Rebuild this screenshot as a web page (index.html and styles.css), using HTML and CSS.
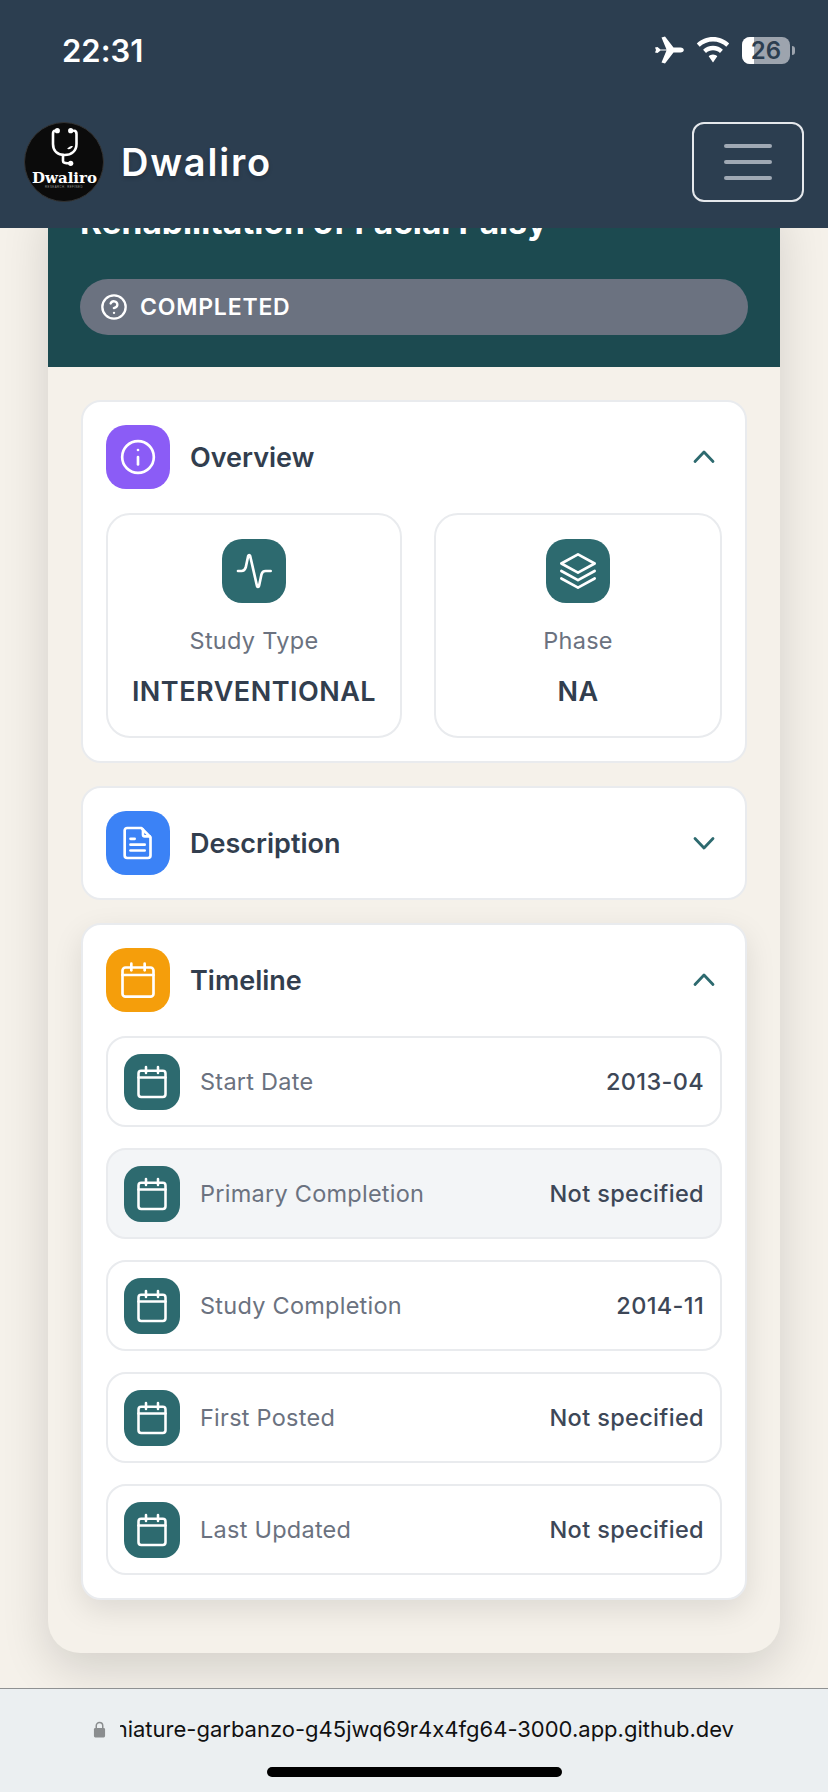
FILE: index.html
```html
<!DOCTYPE html>
<html lang="en">
<head>
  <meta charset="UTF-8" />
  <title>Dwaliro</title>
  <link rel="stylesheet" href="styles.css">
</head>
<body>
  <div class="screen">
    <header class="topbar">
      <div class="status-row">
        <span class="clock">22:31</span>
        <div class="status-icons">
          <svg class="plane" viewBox="0 0 30 28"><path d="M1 11.500 3.500 11 6.500 13.500H12.500L7.500 1.500 11 .5 19.500 11.500H26.500C28.500 11.500 29.800 12.800 29.800 14S28.500 16.500 26.500 16.500H19.500L11 27.500 7.500 26.500 12.500 14.500H6.500L3.500 17 1 16.500 2 14Z" fill="#fff"/></svg>
          <svg class="wifi" viewBox="0 0 34 26"><path d="M17 0C10.600 0 5 2.500 .8 6.500L3.700 9.800C7.200 6.500 11.900 4.500 17 4.500S26.800 6.500 30.300 9.800L33.200 6.500C29 2.500 23.400 0 17 0ZM17 8.700C13.200 8.700 9.700 10.200 7.100 12.700L10 16C11.800 14.200 14.300 13.200 17 13.200S22.200 14.200 24 16L26.900 12.700C24.300 10.200 20.800 8.700 17 8.700ZM17 17.500C15.300 17.500 13.800 18.200 12.700 19.300L17 25.500 21.300 19.300C20.200 18.200 18.700 17.500 17 17.500Z" fill="#fff"/></svg>
          <div class="battery">
            <div class="battery-body"><div class="battery-fill"></div><span class="battery-num">26</span></div>
            <div class="battery-nub"></div>
          </div>
        </div>
      </div>
      <nav class="nav-row">
        <div class="brand">
          <svg class="logo" viewBox="0 0 80 80">
            <circle cx="40" cy="40" r="39.500" fill="#0b0b0b" stroke="#333" stroke-width="1"/>
            <path d="M31 8.700C29.500 8.700 29 10 29 12V22C29 29 33.500 33 40.500 33S52.500 29 52.500 22V12C52.500 10 52 8.700 50 8.700" fill="none" stroke="#fff" stroke-width="2.600" stroke-linecap="round"/>
            <circle cx="33.300" cy="8.700" r="2.600" fill="#fff"/>
            <circle cx="46.700" cy="8.700" r="2.600" fill="#fff"/>
            <path d="M39 33V39C39 40.800 40.500 41.300 46 41.300" fill="none" stroke="#fff" stroke-width="2.600" stroke-linecap="round"/>
            <circle cx="46.700" cy="41.300" r="2.600" fill="#fff"/>
            <path d="M43 27C45 24.500 47 24 49 24C48 26.500 46 27.500 43 27Z" fill="#fff"/>
            <text class="logo-name" x="40.500" y="61" text-anchor="middle">Dwaliro</text>
            <text class="logo-tag" x="40" y="65.500" text-anchor="middle">RESEARCH. REFINED</text>
          </svg>
          <span class="brand-name">Dwaliro</span>
        </div>
        <button class="toggler"><span></span><span></span><span></span></button>
      </nav>
    </header>

    <div class="scroller">
      <main class="study">
        <div class="hero">
          <h1 class="hero-title">Rehabilitation of Facial Palsy</h1>
          <div class="status-pill">
            <svg viewBox="0 0 24 24" class="pill-icon"><circle cx="12" cy="12" r="10"/><path d="M9.100 9a3 3 0 0 1 5.800 1c0 2-3 3-3 3"/><path d="M12 17h.01"/></svg>
            <span>COMPLETED</span>
          </div>
        </div>

        <div class="study-body">
          <section class="panel">
            <div class="panel-head">
              <div class="icon-box purple">
                <svg viewBox="0 0 24 24" class="i-40"><circle cx="12" cy="12" r="9.500"/><path d="M12 16.500v-4.500"/><path d="M12 7.800h.01"/></svg>
              </div>
              <h2>Overview</h2>
              <svg viewBox="0 0 24 24" class="chevron"><path d="M3 16.500l9-9.500 9 9.500"/></svg>
            </div>
            <div class="fact-grid">
              <div class="fact">
                <div class="icon-box teal">
                  <svg viewBox="0 0 24 24" class="i-40"><path d="M2.400 12H4.500C6 12 6.500 11.500 7 10L8.500 3C8.800 2.200 9.400 2.200 9.700 3L13.800 21C14.100 21.800 14.800 21.800 15 21L16.500 14C16.800 12.800 17.500 12 19 12H22"/></svg>
                </div>
                <div class="fact-label">Study Type</div>
                <div class="fact-value">INTERVENTIONAL</div>
              </div>
              <div class="fact">
                <div class="icon-box teal">
                  <svg viewBox="0 0 24 24" class="i-40"><path d="M12 2 22 7.500 12 13 2 7.500Z"/><path d="M2 12 12 17.500 22 12"/><path d="M2 16.500 12 22 22 16.500"/></svg>
                </div>
                <div class="fact-label">Phase</div>
                <div class="fact-value">NA</div>
              </div>
            </div>
          </section>

          <section class="panel">
            <div class="panel-head">
              <div class="icon-box blue">
                <svg viewBox="0 0 24 24" class="i-40"><path d="M5.500 3H14L19.500 8.500V19.500A1.500 1.500 0 0 1 18 21H5.500A1.500 1.500 0 0 1 4 19.500V4.500A1.500 1.500 0 0 1 5.500 3Z"/><path d="M15 4V7A1 1 0 0 0 16 8H19"/><path d="M7.500 9.500h2.500"/><path d="M7.500 13h8.500"/><path d="M7.500 16.500h8.500"/></svg>
              </div>
              <h2>Description</h2>
              <svg viewBox="0 0 24 24" class="chevron"><path d="M3 7.500l9 9.500 9-9.500"/></svg>
            </div>
          </section>

          <section class="panel raised">
            <div class="panel-head">
              <div class="icon-box amber">
                <svg viewBox="0 0 24 24" class="i-40"><rect x="2.700" y="4.500" width="18.600" height="17.500" rx="1.800"/><path d="M8 2.200v4"/><path d="M16 2.200v4"/><path d="M2.700 9h18.600"/></svg>
              </div>
              <h2>Timeline</h2>
              <svg viewBox="0 0 24 24" class="chevron"><path d="M3 16.500l9-9.500 9 9.500"/></svg>
            </div>
            <div class="dates">
              <div class="date-row">
                <div class="icon-box teal small"><svg viewBox="0 0 24 24" class="i-36"><rect x="3" y="4.500" width="18" height="17.500" rx="1.800"/><path d="M8 2v4"/><path d="M16 2v4"/><path d="M3 9h18"/></svg></div>
                <span class="date-label">Start Date</span>
                <span class="date-value">2013-04</span>
              </div>
              <div class="date-row shaded">
                <div class="icon-box teal small"><svg viewBox="0 0 24 24" class="i-36"><rect x="3" y="4.500" width="18" height="17.500" rx="1.800"/><path d="M8 2v4"/><path d="M16 2v4"/><path d="M3 9h18"/></svg></div>
                <span class="date-label">Primary Completion</span>
                <span class="date-value">Not specified</span>
              </div>
              <div class="date-row">
                <div class="icon-box teal small"><svg viewBox="0 0 24 24" class="i-36"><rect x="3" y="4.500" width="18" height="17.500" rx="1.800"/><path d="M8 2v4"/><path d="M16 2v4"/><path d="M3 9h18"/></svg></div>
                <span class="date-label">Study Completion</span>
                <span class="date-value">2014-11</span>
              </div>
              <div class="date-row">
                <div class="icon-box teal small"><svg viewBox="0 0 24 24" class="i-36"><rect x="3" y="4.500" width="18" height="17.500" rx="1.800"/><path d="M8 2v4"/><path d="M16 2v4"/><path d="M3 9h18"/></svg></div>
                <span class="date-label">First Posted</span>
                <span class="date-value">Not specified</span>
              </div>
              <div class="date-row">
                <div class="icon-box teal small"><svg viewBox="0 0 24 24" class="i-36"><rect x="3" y="4.500" width="18" height="17.500" rx="1.800"/><path d="M8 2v4"/><path d="M16 2v4"/><path d="M3 9h18"/></svg></div>
                <span class="date-label">Last Updated</span>
                <span class="date-value">Not specified</span>
              </div>
            </div>
          </section>
        </div>
      </main>
    </div>

    <footer class="browser-bar">
      <div class="url-row">
        <svg class="lock" viewBox="0 0 14 18"><path d="M3.500 8V5a3.500 3.500 0 0 1 7 0v3" fill="none" stroke="#8a8d8f" stroke-width="1.600"/><rect x="1" y="7.500" width="12" height="10" rx="1.500" fill="#8a8d8f"/></svg>
        <div class="url"><span class="url-text">miniature-garbanzo-g45jwq69r4x4fg64-3000.app.github.dev</span></div>
      </div>
      <div class="home-bar"></div>
    </footer>
  </div>
</body>
</html>
```

FILE: styles.css
```css
html, body {
  margin: 0;
  padding: 0;
  height: 100%;
  overflow: hidden;
}
body {
  font-family: Inter, "Noto Sans", sans-serif;
  font-feature-settings: "calt" 0;
  background: #f5f1ea;
  color: #2d3748;
}
.screen {
  height: 1792px;
  display: flex;
  flex-direction: column;
}

/* top bar */
.topbar {
  position: relative;
  z-index: 2;
  height: 228px;
  flex-shrink: 0;
  background: #2c3e50;
  color: #fff;
  box-sizing: border-box;
  padding: 30px 24px 0;
}
.status-row {
  display: flex;
  justify-content: space-between;
  align-items: center;
  height: 40px;
  padding: 0 9px 0 38px;
}
.clock {
  font-size: 31px;
  font-weight: 600;
}
.status-icons {
  display: flex;
  align-items: center;
  gap: 12px;
}
.plane { width: 30px; height: 28px; }
.wifi { width: 34px; height: 26px; }
.battery {
  display: flex;
  align-items: center;
  gap: 2px;
}
.battery-body {
  position: relative;
  width: 48px;
  height: 27px;
  border-radius: 8px;
  background: #9da4ae;
  overflow: hidden;
  display: flex;
  align-items: center;
  justify-content: center;
}
.battery-fill {
  position: absolute;
  left: 0;
  top: 0;
  bottom: 0;
  width: 12px;
  background: #fff;
}
.battery-num {
  position: relative;
  font-size: 24px;
  font-weight: 600;
  color: #2c3e50;
}
.battery-nub {
  width: 3px;
  height: 9px;
  border-radius: 0 3px 3px 0;
  background: #9da4ae;
}
.nav-row {
  display: flex;
  justify-content: space-between;
  align-items: center;
  margin-top: 52px;
}
.brand {
  display: flex;
  align-items: center;
  gap: 17px;
}
.logo { width: 80px; height: 80px; }
.logo-name {
  font-family: "DejaVu Serif", serif;
  font-weight: 700;
  font-size: 15px;
  fill: #fff;
}
.logo-tag {
  font-family: "Liberation Sans", sans-serif;
  font-size: 2.800px;
  letter-spacing: .5px;
  fill: #999;
}
.brand-name {
  font-size: 38px;
  font-weight: 600;
  letter-spacing: 1.800px;
  text-shadow: 0 2px 4px rgba(0, 0, 0, 0.2);
}
.toggler {
  width: 112px;
  height: 80px;
  box-sizing: border-box;
  border: 2px solid #e5e8ec;
  border-radius: 12px;
  background: none;
  padding: 0;
  display: flex;
  flex-direction: column;
  align-items: center;
  justify-content: center;
  gap: 12px;
}
.toggler span {
  width: 48px;
  height: 4px;
  border-radius: 2px;
  background: #a0a9b4;
}

/* study card */
.scroller {
  flex: 1;
  overflow: hidden;
  padding: 0 48px;
}
.study {
  margin-top: -27px;
  background: #f5f1ea;
  border-radius: 0 0 32px 32px;
  box-shadow: 0 16px 48px rgba(0, 0, 0, 0.14);
}
.hero {
  background: #1c4a50;
  color: #fff;
  padding: 0 32px 32px;
}
.hero-title {
  margin: 0 0 35px;
  font-size: 33.500px;
  line-height: 43px;
  font-weight: 700;
}
.status-pill {
  height: 56px;
  border-radius: 28px;
  background: #6b7280;
  display: flex;
  align-items: center;
  gap: 12px;
  padding: 0 20px;
  font-size: 23px;
  font-weight: 600;
  letter-spacing: .8px;
}
.pill-icon {
  width: 28px;
  height: 28px;
  fill: none;
  stroke: #fff;
  stroke-width: 2;
  stroke-linecap: round;
  stroke-linejoin: round;
}
.study-body {
  padding: 33px 33px 53px;
  display: flex;
  flex-direction: column;
  gap: 23px;
}
.panel {
  background: #fff;
  border: 2px solid #e9ebee;
  border-radius: 20px;
  padding: 23px;
}
.panel.raised {
  box-shadow: 0 10px 30px rgba(0, 0, 0, 0.1);
}
.panel-head {
  display: flex;
  align-items: center;
  gap: 20px;
}
.panel-head h2 {
  margin: 0;
  flex: 1;
  font-size: 27px;
  font-weight: 600;
  color: #323e4e;
}
.chevron {
  width: 24px;
  height: 24px;
  margin-right: 6px;
  fill: none;
  stroke: #2d6a6f;
  stroke-width: 2.800;
  stroke-linecap: round;
  stroke-linejoin: round;
}
.icon-box {
  width: 64px;
  height: 64px;
  flex-shrink: 0;
  border-radius: 20px;
  display: flex;
  align-items: center;
  justify-content: center;
}
.icon-box svg {
  fill: none;
  stroke: #fff;
  stroke-linecap: round;
  stroke-linejoin: round;
}
.icon-box.small {
  width: 56px;
  height: 56px;
  border-radius: 17px;
}
.i-36 { width: 36px; height: 36px; stroke-width: 1.700; }
.i-40 { width: 40px; height: 40px; stroke-width: 1.600; }
.purple { background: #8b5cf6; }
.blue { background: #3b82f6; }
.amber { background: #f59e0b; }
.teal { background: #2d6a6f; }

.fact-grid {
  display: grid;
  grid-template-columns: 296px 288px;
  gap: 32px;
  margin-top: 24px;
}
.fact {
  border: 2px solid #e9ebee;
  border-radius: 24px;
  padding: 24px 0 0;
  height: 225px;
  box-sizing: border-box;
  display: flex;
  flex-direction: column;
  align-items: center;
}
.fact-label {
  margin-top: 22px;
  font-size: 23.500px;
  line-height: 32px;
  letter-spacing: .3px;
  color: #6b7280;
}
.fact-value {
  margin-top: 17px;
  font-size: 27px;
  line-height: 36px;
  font-weight: 600;
  letter-spacing: .5px;
  color: #323e4e;
}
.dates {
  display: flex;
  flex-direction: column;
  gap: 21px;
  margin-top: 24px;
}
.date-row {
  height: 91px;
  box-sizing: border-box;
  border: 2px solid #e9ebee;
  border-radius: 20px;
  padding: 0 16px;
  display: flex;
  align-items: center;
  gap: 20px;
}
.date-row.shaded { background: #f3f5f7; }
.date-label {
  flex: 1;
  font-size: 23.500px;
  letter-spacing: .25px;
  color: #6b7280;
}
.date-value {
  font-size: 23.500px;
  font-weight: 500;
  letter-spacing: .35px;
  color: #3d4757;
}

/* browser url bar */
.browser-bar {
  height: 104px;
  flex-shrink: 0;
  position: relative;
  z-index: 2;
  box-sizing: border-box;
  border-top: 1px solid #8f9192;
  background: #ebeff1;
  padding-top: 29px;
}
.url-row {
  display: flex;
  align-items: center;
  padding-left: 93px;
  height: 22px;
}
.lock {
  width: 13px;
  height: 17px;
  flex-shrink: 0;
}
.url {
  width: 614px;
  margin-left: 14px;
  overflow: hidden;
  display: flex;
  justify-content: flex-end;
}
.url-text {
  white-space: nowrap;
  font-size: 22px;
  color: #111;
}
.home-bar {
  width: 295px;
  height: 10px;
  border-radius: 5px;
  background: #000;
  margin: 27px auto 0;
}
```
